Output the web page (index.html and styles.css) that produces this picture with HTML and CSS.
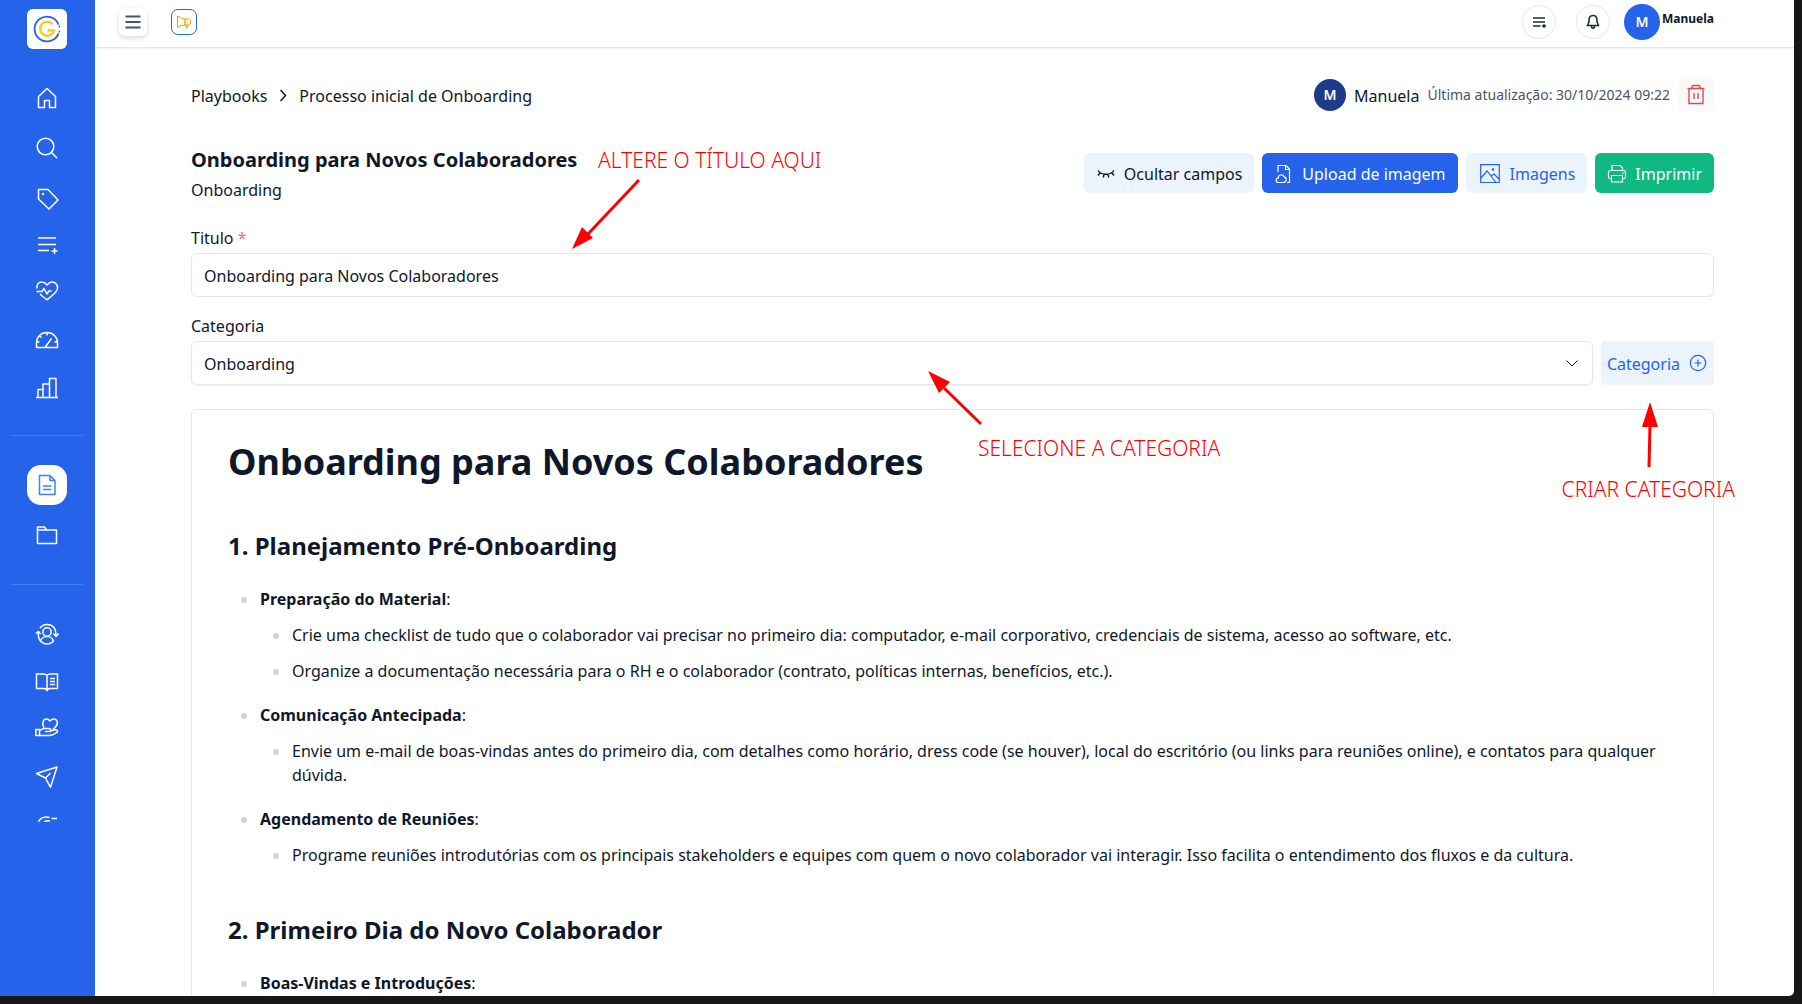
FILE: index.html
```html
<!DOCTYPE html>
<html lang="pt-BR">
<head>
<meta charset="utf-8">
<meta name="viewport" content="width=device-width, initial-scale=1">
<title>Playbooks - Processo inicial de Onboarding</title>
<link rel="stylesheet" href="styles.css">
</head>
<body>
<div class="app">
  <aside class="sidebar">
    <a class="logo" href="#" aria-label="Início">
      <svg width="28" height="28" viewBox="0 0 28 28" fill="none">
        <path d="M25.6 9.600A12.400 12.400 0 1 0 25.600 18.400" stroke="#2563eb" stroke-width="1.800"/>
        <path d="M26.300 11.500v.1M26.300 16.500v.1" stroke="#2563eb" stroke-width="1.800" stroke-linecap="round"/>
        <path d="M19.600 9.200A7 7 0 1 0 21 15.500H14.500" stroke="#facc15" stroke-width="2.400"/>
      </svg>
    </a>
    <nav class="nav" aria-label="Principal">
      <a class="nav-item tall" href="#" aria-label="Home"><svg class="icon" viewBox="0 0 24 24"><path d="M3.500 10.500 12 2.500l8.500 8V21.500H14.500V14.500H9.500V21.500H3.500Z"/></svg></a>
      <a class="nav-item tall" href="#" aria-label="Buscar"><svg class="icon" viewBox="0 0 24 24"><circle cx="10.500" cy="10.500" r="8.300"/><path d="m16.500 16.500 5.500 5.500"/></svg></a>
      <a class="nav-item tall" href="#" aria-label="Etiquetas"><svg class="icon" viewBox="0 0 24 24"><path d="M3.500 3.500H13L23 14 14 23 3.500 13Z"/><circle cx="8" cy="8" r=".5"/></svg></a>
      <a class="nav-item" href="#" aria-label="Listas"><svg class="icon" viewBox="0 0 24 24"><path d="M3 4H21M3 10.500H21M3 16.500H14M19.500 14v6M16.500 17h6"/></svg></a>
      <a class="nav-item" href="#" aria-label="Saúde"><svg class="icon" viewBox="0 0 24 24"><path d="M2 8.500C1 4.500 4 1.800 7 2c2.400.1 4 1.500 5 3 1-1.500 2.600-2.900 5-3 3.300-.1 5.800 2.700 5.500 6.300-.4 4.500-6.500 8-10.500 11.500-2.500-2-5-3.500-7-5.700M1.500 11.500H7l2-3 3 5.500 2-3h2.500"/></svg></a>
      <a class="nav-item tall" href="#" aria-label="Indicadores"><svg class="icon" viewBox="0 0 24 24"><path d="M1.500 19.500V15C1.500 9 6 4.500 12 4.500S22.500 9 22.500 15v4.500ZM12 4.500v3M1.500 14h3M19.500 14h3M10 19.500 16.500 10.500M4.500 8l2 1.500"/></svg></a>
      <a class="nav-item" href="#" aria-label="Relatórios"><svg class="icon" viewBox="0 0 24 24"><path d="M1 21.500H23M3 21V13.500H8M8 21V8H14.500M14.500 21V2.500H21V21"/></svg></a>
      <hr class="nav-line">
      <a class="nav-item tall" href="#" aria-label="Playbooks" aria-current="page"><span class="active"><svg class="icon" viewBox="0 0 24 24"><path d="M4.500 2.500H15L20 7.500V21.500H4.500ZM15 2.500V7.500H20M8 13H16.500M8 16.500H16.500"/></svg></span></a>
      <a class="nav-item tall" href="#" aria-label="Pastas"><svg class="icon" viewBox="0 0 24 24"><path d="M2.500 20.500V4H9.500L11.500 7H21.500V20.500ZM2.500 7H11.500"/></svg></a>
      <hr class="nav-line">
      <a class="nav-item tall" href="#" aria-label="Usuários"><svg class="icon" viewBox="0 0 24 24"><circle cx="12" cy="10" r="4.200"/><path d="M5.500 19.500C6 16.500 9 14.500 12 14.500s6 2 6.500 5M5 6C8.500 1.300 15.500 1.300 19 5.500c1.600 2 2 4.500 2 7.500M19 18.500c-3.500 4.500-10.500 4.500-14 0-1.700-2.200-2-5-1.700-8M.7 11.500 3.300 9.500 5.700 12M18.300 11.500 21 14.500l2.600-3"/></svg></a>
      <a class="nav-item" href="#" aria-label="Biblioteca"><svg class="icon" viewBox="0 0 24 24"><path d="M12 5.500C11 4.500 10 4 8.500 4H1.500V18.500H9c1.500 0 2.500.7 3 2 .5-1.300 1.500-2 3-2h7.500V4h-7C14 4 13 4.500 12 5.500ZM12 5.500V20.500M15 8.500h5M15 11.500h5M15 14.500h5"/></svg></a>
      <a class="nav-item" href="#" aria-label="Benefícios"><svg class="icon" viewBox="0 0 24 24"><path d="M.8 13.500H4.500V19.500H.8ZM4.500 19.500H14c3.500 0 6-1.500 8.500-3.500.5-2-1.500-2.500-3-2l-4 1c1-1.500 0-2.500-2-2.500H9c-2 0-3 1-4.500 2.500M10 15.500h5.500M9 11.500C6.500 8 8 3 11.500 3c1.500 0 2.500.8 3.500 2 1-1.200 2-2 3.500-2 4 0 5.500 5 1.500 8.500l-2 2"/></svg></a>
      <a class="nav-item tall" href="#" aria-label="Enviar"><svg class="icon" viewBox="0 0 24 24"><path d="M22 3 1.500 9.500 10.500 14 15.500 23.300ZM10.500 14 15.500 9"/></svg></a>
      <a class="nav-item" href="#" aria-label="Pagamentos"><svg class="icon" viewBox="0 0 24 24"><path d="M14.500 5.500C8 3.500 3 7.500 3 13c0 5 4 9 9 9M16.500 6.500H22M9 10c2-1.500 4-1.500 6-1"/></svg></a>
    </nav>
  </aside>

  <div class="content">
    <header class="topbar">
      <button class="menu-btn" type="button" aria-label="Menu"><svg width="18" height="18" viewBox="0 0 18 18"><path d="M1.500 3.500H16.500M1.500 9H16.500M1.500 14.500H16.500"/></svg></button>
      <button class="news-btn" type="button" aria-label="Novidades"><svg width="16" height="16" viewBox="0 0 16 16"><path d="M1.500 2v11.500L5 11.500H9V5L5 4Z"/><path class="solid" d="M9 5h3.500c1.500 0 2.300 1.500 2.300 3s-.8 3-2.300 3H9Z"/><path d="M10 11v3h1.500l.5-3"/></svg></button>
      <div class="account">
        <button class="round-btn" type="button" aria-label="Tarefas"><svg width="16" height="16" viewBox="0 0 16 16"><path d="M2 4H14M2 8H14M2 12H9.500M11 12H15M13 10.300v3.400"/></svg></button>
        <button class="round-btn bell" type="button" aria-label="Notificações"><svg width="16" height="16" viewBox="0 0 16 16"><path d="M8 1.500C5 1.500 4 3.800 4 6.500 4 9 3 10 2.500 11.500H13.500C13 10 12 9 12 6.500 12 3.800 11 1.500 8 1.500ZM6.500 12c0 3 3 3 3 0"/></svg></button>
        <span class="avatar large">M</span>
        <span class="account-name">Manuela</span>
      </div>
    </header>

    <main class="page">
      <div class="row">
        <nav class="breadcrumb" aria-label="Trilha">
          <a href="#">Playbooks</a>
          <svg width="16" height="16" viewBox="0 0 16 16"><path d="m5.500 2 5 5.500-5 5.500"/></svg>
          <a href="#">Processo inicial de Onboarding</a>
        </nav>
        <div class="meta">
          <span class="avatar dark">M</span>
          <span class="author">Manuela</span>
          <span class="updated">Última atualização: 30/10/2024 09:22</span>
          <button class="trash-btn" type="button" aria-label="Excluir"><svg width="22" height="22" viewBox="0 0 22 22"><path d="M2.500 4.500H19.500M4 4.500V19.500H18V4.500M7 4.500V2.500L8 1.500H14L15 2.500V4.500M9 9V15M13 9V15"/></svg></button>
        </div>
      </div>

      <div class="row title-row">
        <div class="titles">
          <h2 class="page-title">Onboarding para Novos Colaboradores</h2>
          <p class="page-sub">Onboarding</p>
        </div>
        <div class="actions">
          <button class="btn" type="button"><svg viewBox="0 0 20 20"><path class="lashes" d="M2 6.500C5 11.500 15 11.500 18 6.500M4 9 2 11.500M8 10.500 7.300 13.500M12 10.500 12.700 13.500M16 9 18 11.500"/></svg>Ocultar campos</button>
          <button class="btn primary" type="button"><svg viewBox="0 0 20 20"><path d="M4 8V1.500H12L15.500 5V18.500H13M11.500 1.500V5.500H15.500M4.500 18.500C1.500 18.500 1.500 14.500 4.200 14.200 4 10.500 9 9.800 10 12.800 13.500 13.500 12.500 18.500 9.500 18.500Z"/></svg>Upload de imagem</button>
          <button class="btn link" type="button"><svg class="wide" viewBox="0 0 20 20"><path d="M.7 .7H19.300V18.500H.7ZM1 14 7 7 16 18.500M11 12 14 10 19 15"/><circle cx="13" cy="5.500" r=".7"/></svg>Imagens</button>
          <button class="btn success" type="button"><svg viewBox="0 0 20 20"><path d="M5 6.500V1.500H13L15.500 4V6.500M4.500 14.500H3C1.800 14.500 1.500 13.800 1.500 13V8.500C1.500 7.300 2.300 6.500 3.500 6.500H16.500C17.700 6.500 18.500 7.300 18.500 8.500V13C18.500 14 18 14.500 17 14.500H15.500M4.500 11.500H15.500V18H4.500ZM15 9H16.500"/></svg>Imprimir</button>
        </div>
      </div>

      <form class="fields">
        <div class="field">
          <label for="titulo">Titulo <span class="required">*</span></label>
          <input id="titulo" class="control" type="text" value="Onboarding para Novos Colaboradores">
        </div>
        <div class="field">
          <label for="categoria">Categoria</label>
          <div class="select-row">
            <div class="select-wrap">
              <select id="categoria" class="control"><option>Onboarding</option></select>
              <svg class="chevron" width="12" height="12" viewBox="0 0 12 12"><path d="m.5 3.500 5.500 5.500 5.500-5.500"/></svg>
            </div>
            <button class="btn link add-btn" type="button">Categoria <svg viewBox="0 0 20 20"><circle cx="10" cy="9" r="7.700"/><path d="M10 5.500v7M6.500 9h7"/></svg></button>
          </div>
        </div>
      </form>

      <article class="editor">
        <h1>Onboarding para Novos Colaboradores</h1>
        <h2>1. Planejamento Pré-Onboarding</h2>
        <ul>
          <li><strong>Preparação do Material</strong>:
            <ul>
              <li>Crie uma checklist de tudo que o colaborador vai precisar no primeiro dia: computador, e-mail corporativo, credenciais de sistema, acesso ao software, etc.</li>
              <li>Organize a documentação necessária para o RH e o colaborador (contrato, políticas internas, benefícios, etc.).</li>
            </ul>
          </li>
          <li><strong>Comunicação Antecipada</strong>:
            <ul>
              <li>Envie um e-mail de boas-vindas antes do primeiro dia, com detalhes como horário, dress code (se houver), local do escritório (ou links para reuniões online), e contatos para qualquer dúvida.</li>
            </ul>
          </li>
          <li><strong>Agendamento de Reuniões</strong>:
            <ul>
              <li>Programe reuniões introdutórias com os principais stakeholders e equipes com quem o novo colaborador vai interagir. Isso facilita o entendimento dos fluxos e da cultura.</li>
            </ul>
          </li>
        </ul>
        <h2>2. Primeiro Dia do Novo Colaborador</h2>
        <ul>
          <li><strong>Boas-Vindas e Introduções</strong>:</li>
        </ul>
      </article>
    </main>

    <svg class="arrow arrow-title" width="72" height="72" viewBox="0 0 72 72"><path d="M68 2 17 56"/><polygon points="1,71 11,49 22,60"/></svg>
    <span class="note note-title">ALTERE O TÍTULO AQUI</span>
    <svg class="arrow arrow-select" width="56" height="56" viewBox="0 0 56 56"><path d="M53 53 16 17"/><polygon points="0,0 22,11 11,22"/></svg>
    <span class="note note-select">SELECIONE A CATEGORIA</span>
    <svg class="arrow arrow-create" width="18" height="66" viewBox="0 0 18 66"><path d="M8 65 9 22"/><polygon points="9,0 17,25 1,25"/></svg>
    <span class="note note-create">CRIAR CATEGORIA</span>
  </div>
</div>
</body>
</html>
```
FILE: styles.css
```css
*, *::before, *::after { box-sizing: border-box; }

body {
  margin: 0;
  height: 100vh;
  padding: 0 8px 8px 0;
  overflow: hidden;
  background: #171717;
  color: #0f172a;
  font: 16px/24px "Noto Sans", "Open Sans", sans-serif;
}

h1, h2, p, ul { margin: 0; }
a { color: inherit; text-decoration: none; }
svg { display: block; flex: none; fill: none; stroke: currentColor; }
button { font: inherit; color: inherit; cursor: pointer; padding: 0; border: 0; }

.app {
  display: flex;
  height: 100%;
  overflow: hidden;
  background: #fff;
  border-radius: 0 0 5px 3px;
}

/* Sidebar */
.sidebar {
  flex: none;
  display: flex;
  flex-direction: column;
  align-items: center;
  width: 95px;
  padding: 9px 2px 174px 0;
  background: #2563eb;
  color: #fff;
}
.logo {
  flex: none;
  display: grid;
  place-items: center;
  width: 40px;
  height: 40px;
  margin-bottom: 24px;
  background: #fff;
  border-radius: 6px;
}
.nav {
  display: flex;
  flex-direction: column;
  align-items: center;
  min-height: 0;
  overflow: hidden;
}
.nav-item {
  flex: none;
  display: grid;
  place-items: center;
  width: 72px;
  height: 46px;
}
.nav-item.tall { height: 50px; }
.icon { width: 24px; height: 24px; stroke-width: 1.5; stroke-linejoin: round; }
.nav-line {
  flex: none;
  width: 72px;
  height: 1px;
  margin: 24px 0;
  border: 0;
  background: #3b82f6;
}
.active {
  display: grid;
  place-items: center;
  width: 40px;
  height: 40px;
  border-radius: 14px;
  background: #fff;
  color: #3b82f6;
}

/* Top bar */
.content {
  position: relative;
  flex: 1;
  min-width: 0;
  overflow: hidden;
}
.topbar {
  display: flex;
  align-items: center;
  gap: 24px;
  height: 48px;
  padding: 0 80px 4px 24px;
  border-bottom: 1px solid #e2e8f0;
  box-shadow: 0 1px 2px rgba(15, 23, 42, .05);
}
.menu-btn {
  display: grid;
  place-items: center;
  width: 28px;
  height: 28px;
  border-radius: 6px;
  background: #fff;
  color: #475569;
  stroke-width: 2;
  box-shadow: 0 2px 5px rgba(15, 23, 42, .16);
}
.news-btn {
  display: grid;
  place-items: center;
  width: 26px;
  height: 26px;
  border: 1px solid #2563eb;
  border-radius: 7px;
  background: #fff;
  color: #f59e0b;
}
.solid { fill: #fef3c7; }
.account { display: flex; align-items: center; margin-left: auto; }
.round-btn {
  display: grid;
  place-items: center;
  width: 34px;
  height: 34px;
  margin-right: 20px;
  border: 1px solid #e2e8f0;
  border-radius: 50%;
  background: #fff;
  color: #1e293b;
  stroke-width: 1.6;
}
.round-btn.bell { margin-right: 14px; }
.avatar {
  display: grid;
  place-items: center;
  width: 32px;
  height: 32px;
  border-radius: 50%;
  background: #2563eb;
  color: #fff;
  font-size: 14px;
  font-weight: 600;
}
.avatar.large { width: 36px; height: 36px; }
.avatar.dark { background: #1e3a8a; }
.account-name {
  margin-left: 2px;
  padding-bottom: 6px;
  font-size: 12px;
  line-height: 16px;
  font-weight: 700;
}

/* Page */
.page { padding: 29px 80px 0 96px; }
.row { display: flex; align-items: center; justify-content: space-between; }
.breadcrumb, .meta { display: flex; align-items: center; gap: 8px; }
.breadcrumb { padding-top: 2px; stroke-width: 1.5; }
.author { padding-top: 2px; }
.updated { color: #475569; font-size: 14px; }
.trash-btn {
  display: grid;
  place-items: center;
  width: 36px;
  height: 36px;
  border-radius: 6px;
  background: #f8fafc;
  color: #ef4444;
  stroke-width: 1.4;
}
.title-row { align-items: flex-start; margin-top: 32px; }
.titles { padding-top: 1px; }
.page-title { font-size: 20px; line-height: 28px; font-weight: 700; }
.page-sub { margin-top: 4px; }
.actions { display: flex; gap: 8px; padding-top: 8px; }
.btn {
  display: flex;
  align-items: center;
  gap: 8px;
  height: 40px;
  padding: 2px 12px 0;
  border-radius: 6px;
  background: #ebf4fc;
  white-space: nowrap;
}
.btn svg { width: 20px; height: 20px; stroke-width: 1.2; }
.btn svg.wide { width: 24px; }
.btn .lashes { stroke-width: 1.4; }
.btn.link { color: #2563eb; }
.btn.primary { background: #2563eb; color: #fff; }
.btn.success { background: #10b981; color: #fff; }

.fields { display: grid; gap: 17px; margin-top: 24px; }
.field label { display: block; margin-bottom: 3px; }
.required { color: #f87171; }
.control {
  display: block;
  width: 100%;
  height: 44px;
  padding: 2px 12px 0;
  border: 1px solid #e2e8f0;
  border-radius: 6px;
  background: #fff;
  color: inherit;
  font: inherit;
  appearance: none;
}
.select-row { display: flex; gap: 8px; }
.select-wrap { position: relative; flex: 1; }
.select-wrap .control { box-shadow: 0 1px 2px rgba(15, 23, 42, .06); }
.chevron { position: absolute; top: 16px; right: 15px; pointer-events: none; }
.add-btn { height: 44px; padding: 2px 6px 0; border-radius: 4px; }

/* Document */
.editor {
  margin-top: 24px;
  padding: 32px 36px;
  border: 1px solid #e2e8f0;
  border-radius: 6px;
}
.editor h1 { font-size: 36px; line-height: 40px; font-weight: 700; }
.editor h2 { margin: 47px 0 25px; font-size: 24px; line-height: 32px; font-weight: 700; }
.editor h1 + h2 { margin-top: 48px; }
.editor ul { padding-left: 26px; list-style: none; }
.editor li { position: relative; padding-left: 6px; }
.editor li::before {
  content: "";
  position: absolute;
  top: 10px;
  left: -13px;
  width: 6px;
  height: 6px;
  border-radius: 50%;
  background: #d1d5db;
}
.editor li + li { margin-top: 20px; }
.editor li ul { margin-top: 12px; }
.editor li li + li { margin-top: 12px; }

/* Tutorial notes drawn over the page */
.arrow, .note { position: absolute; pointer-events: none; }
.arrow { stroke: #f00; stroke-width: 3; }
.arrow polygon { fill: #f00; stroke: none; }
.note {
  color: #f00;
  font-size: 21px;
  line-height: 24px;
  font-weight: 300;
  white-space: nowrap;
}
.arrow-title { top: 178px; left: 476px; }
.note-title { top: 148px; left: 503px; }
.arrow-select { top: 371px; left: 833px; }
.note-select { top: 436px; left: 883px; }
.arrow-create { top: 402px; right: 135px; }
.note-create { top: 477px; right: 59px; }
```
